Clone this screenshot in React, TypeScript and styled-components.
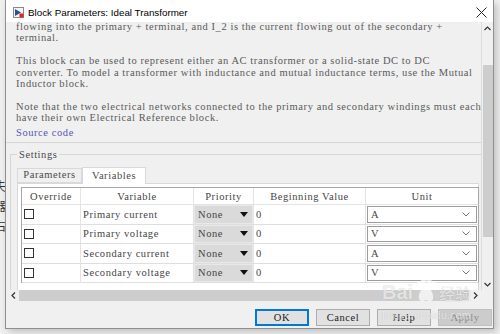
import styled, { createGlobalStyle } from "styled-components";

const MONO = `"Liberation Serif", "DejaVu Serif", serif`;
const UI = `"Liberation Sans", "Noto Sans", sans-serif`;
const CJK = `"Noto Sans CJK SC", "Noto Sans", sans-serif`;

const GlobalStyle = createGlobalStyle`
  html, body { margin: 0; padding: 0; }
  body { background: #f4f4f4; overflow: hidden; }
`;

const descParas = [
  [
    "flowing into the primary + terminal, and I_2 is the current flowing out of the secondary +",
    "terminal.",
  ],
  [
    "This block can be used to represent either an AC transformer or a solid-state DC to DC",
    "converter. To model a transformer with inductance and mutual inductance terms, use the Mutual",
    "Inductor block.",
  ],
  [
    "Note that the two electrical networks connected to the primary and secondary windings must each",
    "have their own Electrical Reference block.",
  ],
];

const rows = [
  { name: "Primary current", unit: "A" },
  { name: "Primary voltage", unit: "V" },
  { name: "Secondary current", unit: "A" },
  { name: "Secondary voltage", unit: "V" },
];

export default function App() {
  return (
    <Desktop>
      <GlobalStyle />
      <BackStrip>
        <BackChars>
          <span>失</span>
          <span>器</span>
          <span>右</span>
        </BackChars>
      </BackStrip>
      <Dialog>
        <TitleBar>
          <BlockIcon />
          <Title>Block Parameters: Ideal Transformer</Title>
          <CloseButton>
            <svg width="11" height="11" viewBox="0 0 11 11">
              <path d="M0.5 0.5 L10.5 10.5 M10.5 0.5 L0.5 10.5" stroke="#222" strokeWidth="1" />
            </svg>
          </CloseButton>
        </TitleBar>
        <Body>
          <ScrollPane>
            <Viewport>
              <Description>
                {descParas.map((p, i) => (
                  <Para key={i}>
                    {p.map((line, j) => (
                      <Line key={j}>{line}</Line>
                    ))}
                  </Para>
                ))}
                <SourceLink>Source code</SourceLink>
              </Description>
              <Group>
                <Legend>Settings</Legend>
                <TabRow>
                  <Tab>Parameters</Tab>
                  <Tab $active>Variables</Tab>
                </TabRow>
                <TabPanel>
                  <Grid>
                    <HeadCell>Override</HeadCell>
                    <HeadCell>Variable</HeadCell>
                    <HeadCell>Priority</HeadCell>
                    <HeadCell>Beginning Value</HeadCell>
                    <HeadCell $last>Unit</HeadCell>
                    {rows.map((r) => (
                      <Row key={r.name}>
                        <Cell>
                          <CheckBox />
                        </Cell>
                        <Cell>{r.name}</Cell>
                        <Cell>
                          <PriorityBox>
                            None
                            <svg width="8" height="5" viewBox="0 0 8 5">
                              <path d="M0 0 H8 L4 5 Z" fill="#111" />
                            </svg>
                          </PriorityBox>
                        </Cell>
                        <Cell>0</Cell>
                        <Cell $last>
                          <UnitBox>
                            {r.unit}
                            <svg width="8" height="5" viewBox="0 0 8 5">
                              <path d="M0.5 0.5 L4 4 L7.5 0.5" fill="none" stroke="#777" strokeWidth="1" />
                            </svg>
                          </UnitBox>
                        </Cell>
                      </Row>
                    ))}
                  </Grid>
                </TabPanel>
              </Group>
            </Viewport>
            <VScroll>
              <Arrow>
                <svg width="7" height="5" viewBox="0 0 7 5">
                  <path d="M0.5 4 L3.5 1 L6.5 4" fill="none" stroke="#333" strokeWidth="1.2" />
                </svg>
              </Arrow>
              <VThumb />
              <Arrow>
                <svg width="7" height="5" viewBox="0 0 7 5">
                  <path d="M0.5 1 L3.5 4 L6.5 1" fill="none" stroke="#333" strokeWidth="1.2" />
                </svg>
              </Arrow>
            </VScroll>
            <HScroll>
              <Arrow>
                <svg width="5" height="7" viewBox="0 0 5 7">
                  <path d="M4 0.5 L1 3.5 L4 6.5" fill="none" stroke="#333" strokeWidth="1.2" />
                </svg>
              </Arrow>
              <HThumb />
              <Arrow>
                <svg width="5" height="7" viewBox="0 0 5 7">
                  <path d="M1 0.5 L4 3.5 L1 6.5" fill="none" stroke="#333" strokeWidth="1.2" />
                </svg>
              </Arrow>
            </HScroll>
            <Corner />
          </ScrollPane>
          <ButtonBar>
            <Button $focused>OK</Button>
            <Button>Cancel</Button>
            <Button>Help</Button>
            <Button $disabled>Apply</Button>
          </ButtonBar>
        </Body>
      </Dialog>
      <Watermark>
        <MarkTop>
          <MarkBai>Bai</MarkBai>
          <svg width="22" height="26" viewBox="0 0 22 26">
            <ellipse cx="4" cy="9" rx="2.6" ry="3.4" fill="rgba(255,255,255,0.7)" />
            <ellipse cx="8.5" cy="4" rx="2.6" ry="3.4" fill="rgba(255,255,255,0.7)" />
            <ellipse cx="14" cy="4" rx="2.6" ry="3.4" fill="rgba(255,255,255,0.7)" />
            <ellipse cx="18.5" cy="9" rx="2.6" ry="3.4" fill="rgba(255,255,255,0.7)" />
            <path d="M11 11 C6 11 3 19 4 23 C5 26 9 25 11 24 C13 25 17 26 18 23 C19 19 16 11 11 11 Z" fill="rgba(255,255,255,0.7)" />
          </svg>
          <MarkCjk>经验</MarkCjk>
        </MarkTop>
        <MarkUrl>jingyan.baidu.com</MarkUrl>
      </Watermark>
    </Desktop>
  );
}

function BlockIcon() {
  return (
    <svg width="11" height="11" viewBox="0 0 11 11" style={{ flex: "none" }}>
      <rect x="0.5" y="0.5" width="10" height="10" fill="#f4f4f4" stroke="#8a8a8a" />
      <path d="M2 2 L8 5.5 L2 9 Z" fill="#2d4f8a" />
      <rect x="6.5" y="6.5" width="4" height="4" fill="#d52a1e" />
    </svg>
  );
}

const Desktop = styled.div`
  position: relative;
  display: flex;
  width: 500px;
  height: 334px;
  overflow: hidden;
  background: #f3f3f3;
`;

const BackStrip = styled.div`
  flex: none;
  width: 5px;
  overflow: hidden;
  background: #f0f0f0;
`;

const BackChars = styled.div`
  display: flex;
  flex-direction: column;
  margin-left: -6px;
  padding-top: 176px;
  font-family: ${CJK};
  font-size: 12px;
  line-height: 20px;
  color: #333;
`;

const Dialog = styled.div`
  flex: none;
  display: flex;
  flex-direction: column;
  width: 489px;
  height: 329px;
  box-sizing: border-box;
  border: 1px solid #8f8f8f;
  border-top: none;
  background: #f0f0f0;
  box-shadow: 3px 3px 8px rgba(0, 0, 0, 0.22);
`;

const TitleBar = styled.div`
  flex: none;
  display: flex;
  align-items: center;
  height: 22px;
  padding: 2px 6px 0 7px;
  box-sizing: border-box;
  background: #fff;
`;

const Title = styled.div`
  margin-left: 4px;
  font-family: ${UI};
  font-size: 9.8px;
  color: #000;
  white-space: nowrap;
`;

const CloseButton = styled.div`
  margin-left: auto;
  display: flex;
  align-items: center;
`;

const Body = styled.div`
  flex: 1;
  display: flex;
  flex-direction: column;
`;

const ScrollPane = styled.div`
  display: grid;
  grid-template-columns: 475px 12px;
  grid-template-rows: 268px 11px;
`;

const Viewport = styled.div`
  overflow: hidden;
  font-family: ${MONO};
  font-size: 10.5px;
  letter-spacing: 0.57px;
`;

const Description = styled.div`
  width: 475px;
  box-sizing: border-box;
  padding: 0 0 0 10px;
  height: 122px;
  border-bottom: 1px solid #d6d6d6;
  color: #5a5a5a;
  line-height: 11.4px;
  margin-top: -1px;
`;

const Para = styled.div`
  margin-bottom: 11.4px;
`;

const Line = styled.div`
  white-space: pre;
`;

const SourceLink = styled.div`
  margin-top: -8px;
  color: #5757b0;
`;

const Group = styled.fieldset`
  margin: 6px 0 0 4px;
  padding: 6px 0 0 6px;
  width: 480px;
  border: 1px solid #d6d6d6;
  min-width: 0;
`;

const Legend = styled.legend`
  margin-left: 0;
  padding: 0 2px;
  line-height: 11px;
  color: #4a4a4a;
`;

const TabRow = styled.div`
  display: flex;
  align-items: flex-end;
  height: 17px;
`;

const Tab = styled.div<{ $active?: boolean }>`
  box-sizing: border-box;
  width: ${(p) => (p.$active ? 64 : 65)}px;
  height: ${(p) => (p.$active ? 17 : 15)}px;
  margin-bottom: ${(p) => (p.$active ? -1 : 0)}px;
  border: 1px solid #d9d9d9;
  border-bottom: ${(p) => (p.$active ? "none" : "1px solid #d9d9d9")};
  background: ${(p) => (p.$active ? "#fff" : "#f0f0f0")};
  color: #4a4a4a;
  display: flex;
  align-items: center;
  justify-content: center;
  line-height: 1;
  position: relative;
  z-index: ${(p) => (p.$active ? 1 : 0)};
`;

const TabPanel = styled.div`
  width: 462px;
  height: 120px;
  box-sizing: border-box;
  padding: 3px 0 0 3px;
  border: 1px solid #d9d9d9;
  background: #fff;
`;

const Grid = styled.div`
  display: grid;
  grid-template-columns: 59px 113px 60px 112px 113px;
  grid-template-rows: 17px;
  grid-auto-rows: 19.5px;
  width: 458px;
  box-sizing: border-box;
  border: 1px solid #a8a8a8;
  border-bottom: none;
  border-right: none;
  color: #454545;
`;

const HeadCell = styled.div<{ $last?: boolean }>`
  display: flex;
  align-items: center;
  justify-content: center;
  border-right: 1px solid ${(p) => (p.$last ? "#a8a8a8" : "#e4e4e4")};
  border-bottom: 1px solid #e4e4e4;
  white-space: nowrap;
`;

const Row = styled.div`
  display: contents;
`;

const Cell = styled.div<{ $last?: boolean }>`
  display: flex;
  align-items: center;
  padding-left: 2px;
  border-right: 1px solid ${(p) => (p.$last ? "#a8a8a8" : "#e4e4e4")};
  border-bottom: 1px solid #dedede;
  white-space: nowrap;
  overflow: hidden;
`;

const CheckBox = styled.div`
  width: 10px;
  height: 10px;
  box-sizing: border-box;
  border: 1px solid #333;
  background: #fff;
`;

const PriorityBox = styled.div`
  flex: 1;
  align-self: stretch;
  margin: 0 0 0 -2px;
  padding: 0 4px 0 3px;
  display: flex;
  align-items: center;
  justify-content: space-between;
  background: #dadada;
  border: 1px solid #e8e8e8;
`;

const UnitBox = styled.div`
  flex: 1;
  align-self: stretch;
  margin: 1px 1px 1px -1px;
  padding: 0 6px 0 3px;
  display: flex;
  align-items: center;
  justify-content: space-between;
  border: 1px solid #9c9c9c;
  background: #fff;
`;

const VScroll = styled.div`
  display: flex;
  flex-direction: column;
  align-items: center;
  background: #f0f0f0;
  border-left: 1px solid #dcdcdc;
`;

const Arrow = styled.div`
  flex: none;
  display: flex;
  align-items: center;
  justify-content: center;
  width: 12px;
  height: 12px;
`;

const VThumb = styled.div`
  width: 10px;
  height: 172px;
  margin: 31px 0 auto;
  background: #cdcdcd;
`;

const HScroll = styled.div`
  display: flex;
  align-items: center;
  background: #f0f0f0;
  padding-left: 1px;
`;

const HThumb = styled.div`
  flex: 1;
  height: 11px;
  background: #cdcdcd;
`;

const Corner = styled.div`
  background: #f0f0f0;
`;

const ButtonBar = styled.div`
  display: flex;
  justify-content: flex-end;
  gap: 7px;
  padding: 8px 1px 0 0;
`;

const Button = styled.div<{ $focused?: boolean; $disabled?: boolean }>`
  width: 54px;
  height: 17px;
  box-sizing: border-box;
  display: flex;
  align-items: center;
  justify-content: center;
  font-family: ${MONO};
  font-size: 10.5px;
  letter-spacing: 0.57px;
  color: ${(p) => (p.$disabled ? "#8a8a8a" : "#222")};
  background: ${(p) => (p.$disabled ? "#cccccc" : "#e1e1e1")};
  border: 1px solid
    ${(p) => (p.$focused ? "#0078d7" : p.$disabled ? "#bfbfbf" : "#adadad")};
  box-shadow: ${(p) => (p.$focused ? "inset 0 0 0 1px #0078d7" : "none")};
`;

const Watermark = styled.div`
  position: absolute;
  left: 382px;
  top: 276px;
  display: flex;
  flex-direction: column;
  pointer-events: none;
  color: rgba(255, 255, 255, 0.7);
  text-shadow: 0 0 1px rgba(0, 0, 0, 0.2);
`;

const MarkTop = styled.div`
  display: flex;
  align-items: flex-end;
  gap: 2px;
`;

const MarkBai = styled.div`
  font-family: ${UI};
  font-size: 20px;
  font-weight: 700;
  line-height: 20px;
`;

const MarkCjk = styled.div`
  font-family: ${CJK};
  font-size: 16px;
  line-height: 18px;
`;

const MarkUrl = styled.div`
  margin-top: 7px;
  font-family: ${UI};
  font-size: 11px;
  line-height: 12px;
`;
